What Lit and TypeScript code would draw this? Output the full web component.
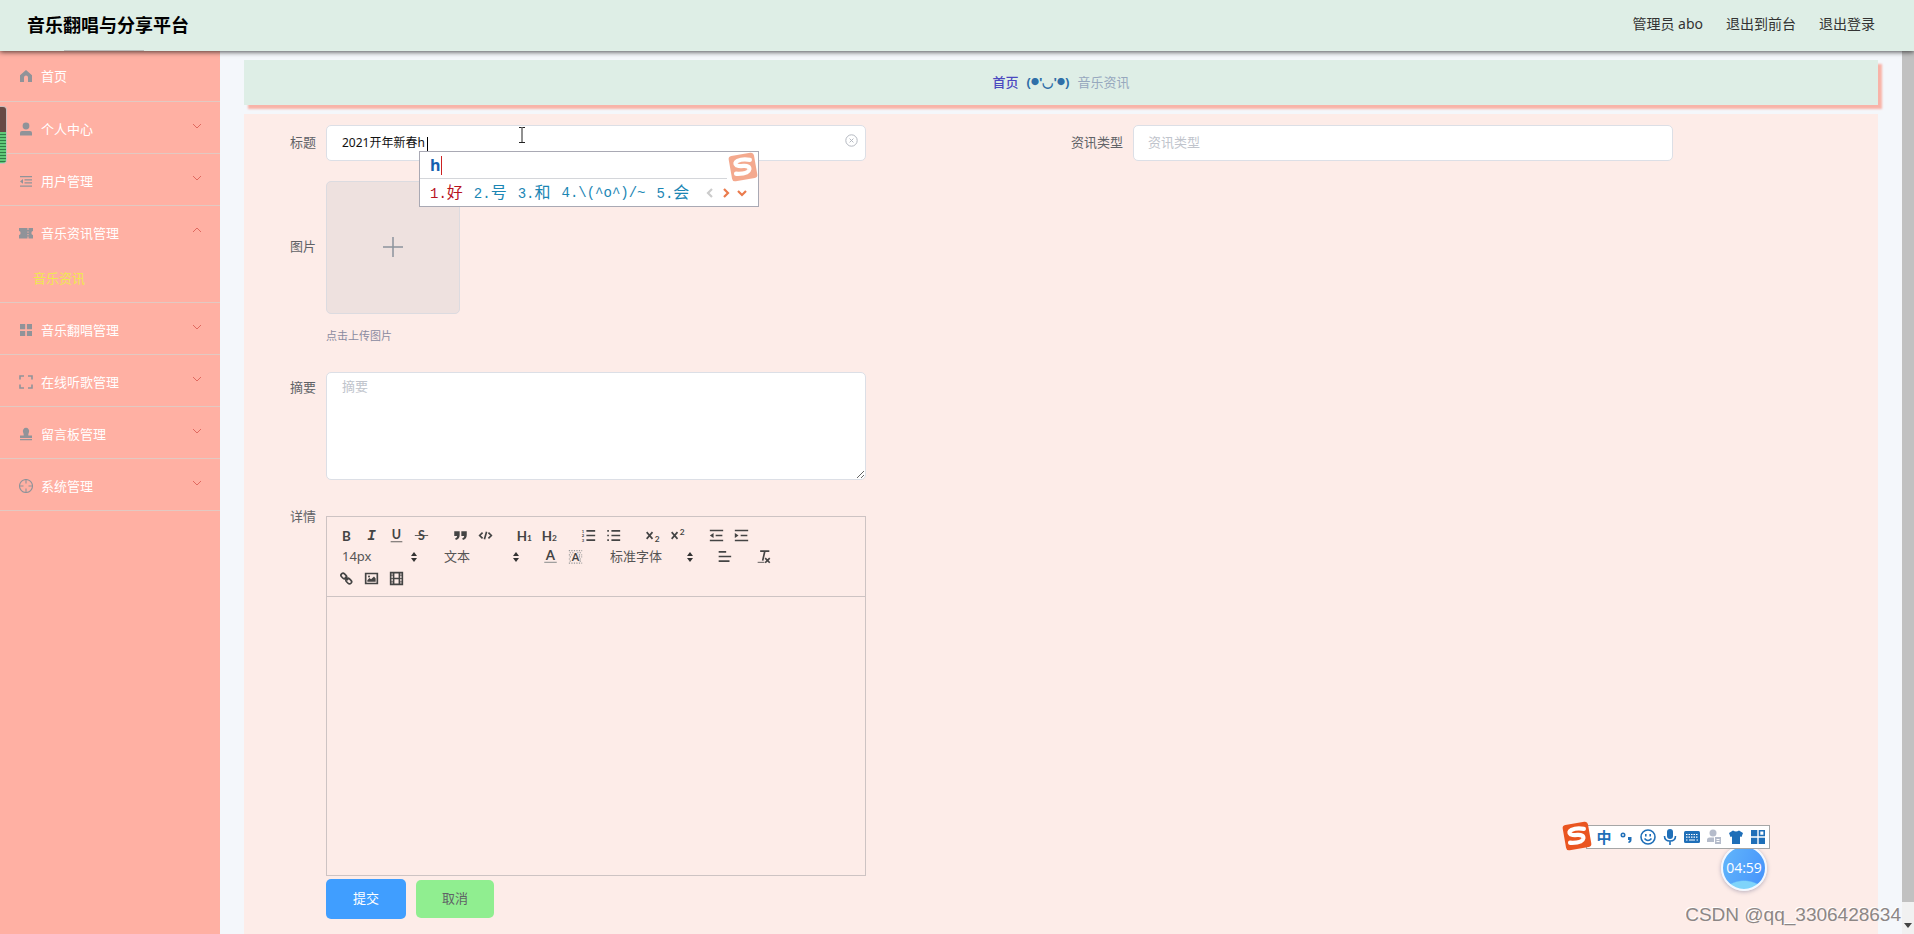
import { LitElement, html, svg, css } from "lit";
import { customElement, state } from "lit/decorators.js";
import { classMap } from "lit/directives/class-map.js";

const arrow = (d: string, cls = "") => html`<svg class="arrow ${cls}" viewBox="0 0 12 12" aria-hidden="true"><path d=${d} /></svg>`;

const menuIcons: Record<string, unknown> = {
  home: svg`<path d="M7 1 13 6.3V13H9V8.6a2 2 0 0 0-4 0V13H1V6.3z"/>`,
  user: svg`<circle cx="7" cy="4" r="3.4"/><path d="M1 13.5V11q0-2 2-2h8q2 0 2 2v2.500z"/>`,
  fold: svg`<path d="M1 2h12v1.300H1zM5.500 5.300H13v1.300H5.500zM5.500 8.300H13v1.300H5.500zM1 11.500h12v1.300H1zM4 5v4.800L1 7.400z"/>`,
  ticket: svg`<path d="M0 2h8.500v2h1V2H14v3q-1.600 0-1.600 2T14 9v3.500H9.500v-2h-1v2H0V9q1.600 0 1.600-2T0 5zM8.500 5.500v1.200h1V5.500zm0 2.500v1.200h1V8z"/>`,
  grid: svg`<path d="M1 1h5.200v5.200H1zM7.900 1H13v5.200H7.900zM1 7.900h5.200V13H1zM7.900 7.900H13V13H7.900z"/>`,
  full: svg`<path class="line" d="M1 4.500V1h4M9 1h4v3.500M13 9.500V13H9M5 13H1V9.500"/>`,
  stamp: svg`<path d="M7 .8a3.200 3.200 0 0 1 3 4.200Q9 7.500 9.300 8.500H13v2.600H1V8.500h3.700Q5 7.500 4 5a3.200 3.200 0 0 1 3-4.200zM1 12h12v1.200H1z"/>`,
  aim: svg`<circle class="thin" cx="7" cy="7" r="6.500"/><path class="thin" d="M7 .5v4M7 9.500v4M.5 7h4M9.500 7h4"/>`,
};

interface Item {
  icon: string;
  text: string;
  children?: string[];
  leaf?: boolean;
}

const items: Item[] = [
  { icon: "home", text: "首页", leaf: true },
  { icon: "user", text: "个人中心" },
  { icon: "fold", text: "用户管理" },
  { icon: "ticket", text: "音乐资讯管理", children: ["音乐资讯"] },
  { icon: "grid", text: "音乐翻唱管理" },
  { icon: "full", text: "在线听歌管理" },
  { icon: "stamp", text: "留言板管理" },
  { icon: "aim", text: "系统管理" },
];

@customElement("side-menu")
export class SideMenu extends LitElement {
  @state() private open = "音乐资讯管理";

  static styles = css`
    :host { display: block; background: #ffb0a3; }
    .row {
      display: grid; grid-template-columns: 14px 1fr 12px; column-gap: 8px; align-items: center;
      box-sizing: border-box; width: 100%; height: 51px; padding: 3px 17px 0 19px;
      border: 0; background: none; color: #fff; font: inherit; text-align: left; cursor: pointer;
      text-decoration: none;
    }
    .group { border-bottom: 1px solid #e2c9c2; }
    .leaf .row { height: 50px; padding-top: 0; }
    .icon { width: 14px; height: 14px; fill: #909399; }
    .line { fill: none; stroke: #909399; stroke-width: 1.6; stroke-dasharray: none; }
    .thin { fill: none; stroke: #909399; stroke-width: 1.1; }
    .arrow { width: 12px; height: 12px; fill: none; stroke: #e0695f; margin-bottom: 6px; }
    .sub { display: block; height: 45px; line-height: 43px; padding-left: 33px; color: #efe850; text-decoration: none; }
  `;

  render() {
    return html`<nav>
      ${items.map((i) => {
        const inner = html`<svg class="icon" viewBox="0 0 14 14" aria-hidden="true">${menuIcons[i.icon]}</svg><span>${i.text}</span>`;
        const open = this.open === i.text;
        return html`<div class=${classMap({ group: true, leaf: !!i.leaf })}>
          ${i.leaf
            ? html`<a class="row" href="#home">${inner}</a>`
            : html`<button class="row" aria-expanded=${open} @click=${() => (this.open = open ? "" : i.text)}>
                ${inner}${arrow(open ? "M2 8l4-4 4 4" : "M2 4l4 4 4-4")}
              </button>`}
          ${open && i.children ? i.children.map((c) => html`<a class="sub" href="#news">${c}</a>`) : ""}
        </div>`;
      })}
    </nav>`;
  }
}

const tool = (name: string, body: unknown) => html`<button class="tool" type="button" aria-label=${name}><svg viewBox="0 0 18 18">${body}</svg></button>`;

const pick = (name: string, cls: string, value: string) => html`<span class="pick ${cls}">
  <select aria-label=${name}><option>${value}</option></select>
  <svg class="updown" viewBox="0 0 6 10" aria-hidden="true"><path d="M0 4 3 0l3 4zM0 6h6L3 10z" /></svg>
</span>`;

@customElement("rich-editor")
export class RichEditor extends LitElement {
  static styles = css`
    :host { display: block; border: 1px solid #cdc3c3; color: #444; }
    .bar { padding: 6px 7px; border-bottom: 1px solid #cdc3c3; }
    .line { display: flex; gap: 14px; height: 24px; align-items: center; }
    .line.mid { height: 19px; }
    .set { display: flex; }
    .tool { width: 25px; height: 20px; padding: 0; border: 0; background: none; display: grid; place-items: center; }
    .tool svg { width: 15px; height: 15px; fill: none; stroke: #444; stroke-width: 2; overflow: visible; }
    .tool .f { fill: #444; stroke: none; }
    .tool .t { stroke-width: 1; }
    .tool .pale { stroke: #999; stroke-width: 1.4; }
    .tool text { fill: #444; stroke: none; font: 700 16px Lato, "Open Sans", sans-serif; text-anchor: middle; }
    .tool .i { font: italic 700 17px "Liberation Mono", monospace; }
    .tool .u { font-weight: 700; font-size: 15px; }
    .tool .s { font-size: 10px; }
    .tool .m { font-size: 13px; }
    .tool .n { font-size: 5px; }
    .pick { position: relative; display: block; height: 20px; }
    .size { width: 88px; }
    .block { width: 88px; }
    .face { width: 96px; }
    select { appearance: none; display: block; width: 100%; height: 18px; padding: 0 0 0 8px; border: 0; background: none; color: #555; font: inherit; line-height: 18px; }
    .updown { position: absolute; right: 5px; top: 5px; width: 6px; height: 10px; fill: #333; }
    .area { min-height: 278px; outline: 0; }
  `;

  render() {
    return html`
      <div class="bar">
        <div class="line">
          <div class="set">
            ${tool("加粗", svg`<text x="9" y="15">B</text>`)}
            ${tool("斜体", svg`<text class="i" x="9" y="14">I</text>`)}
            ${tool("下划线", svg`<text class="u" x="9" y="13">U</text><path class="t" d="M2 16.500h14"/>`)}
            ${tool("删除线", svg`<text class="u" x="9" y="14">S</text><path class="t" d="M1 9h16"/>`)}
          </div>
          <div class="set">
            ${tool("引用", svg`<path class="f" d="M1.500 4h6.500v4.500Q8 13 3.500 14.500L2.500 12.500Q5 11.500 5 9.500H1.500zM10 4h6.500v4.500q0 4.500-4.500 6l-1-2q2.500-1 2.500-3H10z"/>`)}
            ${tool("代码", svg`<path d="M5.500 5.500 2 9l3.500 3.500M12.500 5.500 16 9l-3.500 3.500M10.300 4.500 7.700 13.500"/>`)}
          </div>
          <div class="set">
            ${tool("标题一", svg`<text x="6" y="15">H</text><text class="s" x="15" y="15">1</text>`)}
            ${tool("标题二", svg`<text x="6" y="15">H</text><text class="s" x="15" y="15">2</text>`)}
          </div>
          <div class="set">
            ${tool("有序列表", svg`<path d="M6.500 3.500H17M6.500 9H17M6.500 14.500H17"/><text class="n" x="2.500" y="5.500">1</text><text class="n" x="2.500" y="11">2</text><text class="n" x="2.500" y="16.500">3</text>`)}
            ${tool("无序列表", svg`<path d="M6.500 3.500H17M6.500 9H17M6.500 14.500H17M1.500 3.500h2M1.500 9h2M1.500 14.500h2"/>`)}
          </div>
          <div class="set">
            ${tool("下标", svg`<path d="M2 5l7 8M9 5l-7 8"/><text class="s" x="14.500" y="17">2</text>`)}
            ${tool("上标", svg`<path d="M2 5l7 8M9 5l-7 8"/><text class="s" x="14.500" y="8">2</text>`)}
          </div>
          <div class="set">
            ${tool("减少缩进", svg`<path d="M1 3h16M8 9h8M1 15h16"/><path class="f" d="M1 9l4.500-3v6z"/>`)}
            ${tool("增加缩进", svg`<path d="M1 3h16M8 9h8M1 15h16"/><path class="f" d="M5.500 9 1 6v6z"/>`)}
          </div>
        </div>
        <div class="line mid">
          ${pick("字号", "size", "14px")}
          ${pick("段落", "block", "文本")}
          <div class="set">
            ${tool("文字颜色", svg`<text x="9" y="13">A</text><path class="pale" d="M1.500 16h15"/>`)}
            ${tool("背景颜色", svg`<path class="pale" stroke-dasharray="1.500 1.500" d="M1 2h16M2 4.500h5M11 4.500h6M1 7h4M13 7h4M2 9.500h3M13 9.500h4M1 12h3M14 12h3M2 14.500h2M14 14.500h3M1 17h16"/><text class="m" x="9" y="14">A</text>`)}
          </div>
          ${pick("字体", "face", "标准字体")}
          ${tool("对齐", svg`<path d="M2 3.500h9M2 9h15M2 14.500h13"/>`)}
          ${tool("清除格式", svg`<path d="M5 2.500h11M10.500 3 8 14"/><path class="t" d="M2 16h8"/><path d="M11 11l5.500 5.500M16.500 11 11 16.500"/>`)}
        </div>
        <div class="line">
          <div class="set">
            ${tool("链接", svg`<rect x="2" y="3.500" width="7.500" height="5" rx="2.500" transform="rotate(45 5.700 6)"/><rect x="8" y="9.500" width="7.500" height="5" rx="2.500" transform="rotate(45 11.700 12)"/><path d="M7 7l4 4"/>`)}
            ${tool("图片", svg`<path d="M2 3h14v12H2z"/><path class="f" d="M4 13v-2l2.500-2.500L8.500 10 12 6.500l2 2.500v4z"/><circle class="f" cx="6" cy="6.500" r="1.200"/>`)}
            ${tool("视频", svg`<path d="M2 2h14v14H2zM5.500 2v14M12.500 2v14M5.500 9h7"/><path class="t" d="M2 5h3M2 9h3M2 13h3M13 5h3M13 9h3M13 13h3"/>`)}
          </div>
        </div>
      </div>
      <div class="area" contenteditable="true" role="textbox" aria-label="详情"></div>
    `;
  }
}

const sogou = html`<svg class="sogou" viewBox="0 0 30 30" aria-hidden="true">
  <g transform="rotate(-10 15 15)">
    <rect x="3" y="3" width="24" height="24" rx="3" />
    <path d="M22.500 9.500Q16 7 11 8.500q-4 1.500-1.500 4 2 1.300 6 1.600 6 .6 5 4-1.500 4.500-13 2" />
  </g>
</svg>`;

@customElement("app-root")
export class AppRoot extends LitElement {
  static styles = css`
    :host {
      display: grid; grid-template-rows: 51px 1fr; height: 100vh; overflow: hidden; position: relative;
      background: #f4f7fb; color: #606266;
      font: 13px/20px "Noto Sans", "Noto Sans CJK SC", sans-serif;
    }
    header {
      display: flex; align-items: center; justify-content: space-between; padding: 0 39px 2px 27px;
      background: #deeee6; box-shadow: 0 1px 5px rgba(0, 0, 0, 0.7); z-index: 1;
    }
    h1 { margin: 0; font-size: 18px; line-height: 26px; color: #000; }
    .links { display: flex; gap: 23px; font-size: 14px; line-height: 18px; padding-bottom: 2px; }
    .links a, .links span { color: #333; text-decoration: none; }
    .body { display: grid; grid-template-columns: 220px minmax(0, 1fr) 12px; min-height: 0; }
    main { display: flex; flex-direction: column; min-width: 0; padding: 9px 24px 0; }
    .crumbs {
      display: flex; align-items: center; justify-content: center; gap: 8px; box-sizing: border-box; height: 45px; margin-bottom: 9px; padding-bottom: 2px;
      background: #deeee6; box-shadow: 4px 4px 2px #f8b3a8; color: #97a8be;
    }
    .crumbs a { color: #4b48c0; font-weight: 500; text-decoration: none; }
    .crumbs .face { display: flex; align-items: center; color: #2f6fa8; font-weight: 700; }
    .crumbs .dot { font-size: 8px; }
    form { flex: 1; min-height: 0; padding: 11px 10px 0; background: #fdece8; }
    .cols { display: grid; grid-template-columns: 1fr 1fr; }
    .field { display: grid; grid-template-columns: 72px minmax(0, 540px); }
    .field > label, .field > .label { padding: 7px 10px 0 0; text-align: right; white-space: nowrap; }
    .wide > label { padding-top: 5px; }
    .cols .field:last-child { grid-template-columns: auto minmax(0, 540px); justify-content: start; }
    .field .indent { padding-left: 10px; }
    .box { position: relative; }
    input, textarea {
      box-sizing: border-box; display: block; width: 100%; padding: 0 14px 2px; border: 1px solid #dcdfe6; border-radius: 5px;
      background: #fff; color: #111; font: inherit; outline: 0;
    }
    input { height: 36px; }
    .title { padding-left: 15px; font-size: 12px; }
    ::placeholder { color: #c0c4cc; opacity: 1; }
    textarea { height: 108px; padding: 3px 15px; resize: vertical; }
    .clear { position: absolute; right: 8px; top: 9px; width: 13px; height: 13px; padding: 0; border: 0; background: none; }
    .clear svg { display: block; width: 13px; height: 13px; fill: none; stroke: #b4b8c0; }
    .caret { position: absolute; left: 101px; top: 12px; width: 1px; height: 14px; background: #000; }
    .beam { position: absolute; left: 192px; top: 2px; width: 8px; height: 16px; fill: none; stroke: #222; }
    .photo { margin-top: 20px; align-items: start; }
    .photo .label { padding-top: 55px; }
    .upload {
      display: grid; place-items: center; width: 134px; height: 133px; padding: 0 0 2px; border: 1px solid #dcdbe0;
      border-radius: 5px; background: #eee1df;
    }
    .upload svg { width: 22px; height: 22px; fill: none; stroke: #8c939d; stroke-width: 1.5; }
    .tip { margin: 12px 0 26px; font-size: 11px; color: #8a8aa0; }
    .detail { margin-top: 36px; }
    .detail .label { padding-top: 0; line-height: 1px; }
    .actions { display: flex; align-items: center; gap: 10px; padding: 3px 0 0 72px; }
    .actions button { height: 40px; width: 80px; padding: 0 0 2px; border: 0; border-radius: 5px; background: #409eff; color: #fff; font: inherit; }
    .actions .cancel { height: 38px; width: 78px; background: #90ee90; color: #606266; }
    .scroll { display: flex; flex-direction: column; background: #f1f1f1; }
    .thumb { flex: 1; background: #c1c1c1; }
    .down { height: 32px; display: grid; place-items: center; }
    .down svg { width: 8px; height: 5px; margin-top: 14px; fill: #444; }

    .ime {
      position: absolute; left: 93px; top: 26px; z-index: 2; box-sizing: border-box; width: 340px; height: 56px;
      border: 1px solid #a9a9b4; background: #fff; color: #1b86b4; font: 14px/24px "Liberation Mono", "Noto Sans CJK SC", monospace;
    }
    .typed { display: flex; align-items: center; height: 26px; margin-right: 31px; padding-left: 10px; border-bottom: 1px solid #d4d6da; color: #1560b0; font: 700 16px/24px "Open Sans", sans-serif; }
    .typed i { width: 1px; height: 19px; background: #c22; }
    .cands { display: flex; align-items: center; gap: 11px; padding-left: 10px; }
    .cands b { font-weight: 400; font-size: 16px; font-family: "Noto Sans CJK SC", sans-serif; }
    .cands .first { color: #b8141f; }
    .nav { display: flex; gap: 4px; margin-left: 4px; }
    .nav svg { width: 12px; height: 12px; fill: none; stroke: #ea7a4c; stroke-width: 2.2; }
    .nav .off { stroke: #ccc; }
    .sogou { position: absolute; width: 32px; height: 32px; }
    .sogou rect { fill: #ea5520; }
    .sogou path { fill: none; stroke: #fff; stroke-width: 4; stroke-linecap: round; }
    .ime .sogou { right: -1px; top: -1px; opacity: 0.5; }

    .tray {
      position: absolute; right: 144px; bottom: 85px; z-index: 3; box-sizing: border-box; width: 184px; height: 24px;
      display: grid; grid-template-columns: repeat(8, 22px); align-items: center; justify-items: center; padding-left: 6px;
      border: 1px solid #a6a6a6; background: #fff; color: #1f6fb8;
    }
    .tray > svg:not(.sogou) { width: 16px; height: 16px; fill: #1f6fb8; }
    .tray .ln { fill: none; stroke: #1f6fb8; stroke-width: 1.600; }
    .tray .w { fill: none; stroke: #fff; stroke-width: 1.200; }
    .tray .pale { fill: #b5bccb; }
    .tray .sogou { left: -26px; top: -6px; }
    .ch { font-weight: 700; font-size: 15px; }
    .ball {
      position: absolute; right: 147px; bottom: 43px; z-index: 2; width: 42px; height: 42px; border: 2px solid #f3f8ff; border-radius: 50%;
      display: grid; place-items: center; color: #fff; font: 400 14px/20px "Open Sans", sans-serif;
      background: radial-gradient(circle at 50% 150%, #7fd4fa 0 43%, transparent 45%), linear-gradient(110deg, #62b6fb, #4592fb);
      box-shadow: 0 1px 4px rgba(80, 80, 120, 0.4);
    }
    .mark {
      position: absolute; right: 13px; bottom: 7px; z-index: 2; color: #8c8685; font: 19px/24px "Liberation Sans", sans-serif;
      text-shadow: -1px -1px 0 #fff;
    }
    .meter {
      position: absolute; left: 0; top: 106px; z-index: 2; width: 6px; height: 56px; border: 1px solid #cbb; border-left: 0; border-radius: 0 4px 4px 0;
      background: linear-gradient(#674a45 0 25px, transparent 25px), repeating-linear-gradient(#2f7d46 0 1px, #5fc978 1px 3px);
    }
    .peek { position: absolute; left: 64px; top: 50px; z-index: 2; width: 80px; height: 1px; background: #b9bdba; }
  `;

  render() {
    return html`
      <header>
        <h1>音乐翻唱与分享平台</h1>
        <div class="links"><span>管理员 abo</span><a href="#front">退出到前台</a><a href="#logout">退出登录</a></div>
      </header>
      <div class="body">
        <side-menu></side-menu>
        <main>
          <div class="crumbs"><a href="#home">首页</a><span class="face">(<span class="dot">●</span>'◡'<span class="dot">●</span>)</span><span>音乐资讯</span></div>
          <form @submit=${(e: Event) => e.preventDefault()}>
            <div class="cols">
              <div class="field">
                <label for="title">标题</label>
                <div class="box">
                  <input id="title" class="title" type="text" value="2021开年新春h" />
                  <span class="caret"></span>
                  <svg class="beam" viewBox="0 0 8 16" aria-hidden="true"><path d="M1 .5h2.500l.5.500.5-.5H7M4 1v14M1 15.500h6" /></svg>
                  <button class="clear" type="button" aria-label="清空">
                    <svg viewBox="0 0 13 13"><circle cx="6.500" cy="6.500" r="5.700" /><path d="M4.600 4.600l3.800 3.800M8.400 4.600 4.600 8.400" /></svg>
                  </button>
                  <div class="ime">
                    <div class="typed">h<i></i></div>
                    <div class="cands">
                      <span class="first">1.<b>好</b></span><span>2.<b>号</b></span><span>3.<b>和</b></span><span>4.\\(^o^)/~</span><span>5.<b>会</b></span>
                      <span class="nav">
                        <svg class="off" viewBox="0 0 12 12"><path d="M8 2 4 6l4 4" /></svg>
                        <svg viewBox="0 0 12 12"><path d="M4 2l4 4-4 4" /></svg>
                        <svg viewBox="0 0 12 12"><path d="M2 4l4 4 4-4" /></svg>
                      </span>
                    </div>
                    ${sogou}
                  </div>
                </div>
              </div>
              <div class="field">
                <label for="kind" class="indent">资讯类型</label>
                <input id="kind" type="text" placeholder="资讯类型" />
              </div>
            </div>
            <div class="field photo">
              <span class="label">图片</span>
              <div>
                <button class="upload" type="button" aria-label="点击上传图片"><svg viewBox="0 0 22 22"><path d="M11 1v20M1 11h20" /></svg></button>
                <p class="tip">点击上传图片</p>
              </div>
            </div>
            <div class="field wide">
              <label for="brief">摘要</label>
              <textarea id="brief" placeholder="摘要"></textarea>
            </div>
            <div class="field detail">
              <span class="label">详情</span>
              <rich-editor></rich-editor>
            </div>
            <div class="actions"><button type="submit">提交</button><button type="button" class="cancel">取消</button></div>
          </form>
        </main>
        <div class="scroll" aria-hidden="true"><div class="thumb"></div><div class="down"><svg viewBox="0 0 8 5"><path d="M0 0h8L4 5z" /></svg></div></div>
      </div>
      <span class="meter"></span><span class="peek"></span>
      <div class="tray">
        ${sogou}
        <span class="ch">中</span>
        <svg viewBox="0 0 16 16"><circle class="ln" cx="5" cy="6" r="1.700" /><path d="M10 8h3.500v3q0 2.500-3 3l-.3-1.300q1.300-.3 1.300-1.700H10z" /></svg>
        <svg viewBox="0 0 16 16"><circle class="ln" cx="8" cy="8" r="7" /><path class="ln" d="M5.800 5v2.500M10.200 5v2.500M4.500 9.500q3.500 4 7 0" /></svg>
        <svg viewBox="0 0 16 16"><rect x="5" y="0" width="6" height="10" rx="3" /><path class="ln" d="M2.500 7q0 5 5.500 5t5.500-5M8 12v4" /></svg>
        <svg viewBox="0 0 16 16"><rect y="2" width="16" height="12" rx="1.500" /><path class="w" d="M2 5.500h12M2 8.200h12" stroke-dasharray="1.500 1" /><path class="w" d="M2 11h1.500M5 11h6M12.500 11H14" /></svg>
        <svg viewBox="0 0 16 16"><circle class="pale" cx="7" cy="4" r="3.500" /><path class="pale" d="M1 13V11q0-2.500 2.500-2.500H8V13zM9 8h6v7H9z" /><path class="w" d="M10.500 10.500h3M10.500 12.500h3" /></svg>
        <svg viewBox="0 0 16 16"><path d="M1 4 5 1.500q3 2 6 0L15 4l-1.500 4-1.500-.5V15H4V7.500L2.500 8z" /></svg>
        <svg viewBox="0 0 16 16"><path d="M1 1h6.300v6.300H1zM1 8.700h6.300V15H1zM8.700 8.700H15V15H8.700z" /><path class="ln" d="M9.500 1.800h4.700v4.700H9.500z" /></svg>
      </div>
      <div class="ball">04:59</div>
      <div class="mark">CSDN @qq_3306428634</div>
    `;
  }
}
